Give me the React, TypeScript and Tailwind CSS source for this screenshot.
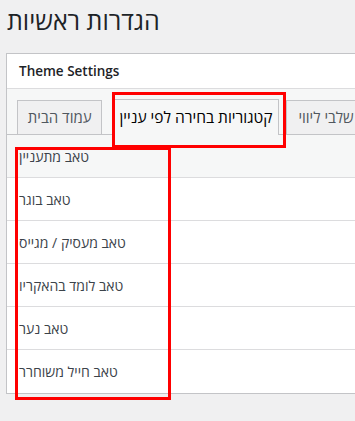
import React from "react";

const rows = [
  "טאב מתעניין",
  "טאב בוגר",
  "טאב מעסיק / מגייס",
  "טאב לומד בהאקריו",
  "טאב נער",
  "טאב חייל משוחרר",
];

export default function App() {
  return (
    <div
      className="relative w-[355px] h-[421px] overflow-hidden bg-[#f0f0f1]"
      style={{ fontFamily: '"Open Sans", "Liberation Sans", "DejaVu Sans", sans-serif' }}
    >
      <div className="pl-[7px] pt-[5px] h-[53px] text-[25px] leading-[30px] text-[#1d2327]">
        הגדרות ראשיות
      </div>
      <div className="ml-[6px] w-[370px] border border-[#c3c4c7] bg-white">
        <div className="h-[35px] flex items-center pl-[12px] border-b border-[#dcdcde] text-[13.5px] font-semibold text-[#1d2327]">
          Theme Settings
        </div>
        <div className="h-[46px] bg-[#f6f7f7] pt-[10px] pl-[10px] flex items-end gap-0 border-b border-[#c3c4c7]">
          <div className="h-[35px] w-[87px] -mb-px border border-[#c3c4c7] bg-[#f0f0f1] flex items-center justify-center text-[15px] text-[#50575e]">
            <span dir="rtl">עמוד הבית</span>
          </div>
          <div className="h-[36px] w-[170px] ml-[10px] -mb-px border border-b-0 border-[#c3c4c7] bg-[#f6f7f7] flex items-center justify-center text-[15.5px] text-[#000]">
            <span dir="rtl">קטגוריות בחירה לפי עניין</span>
          </div>
          <div className="h-[35px] w-[90px] ml-[7px] -mb-px border border-[#c3c4c7] bg-[#f0f0f1] flex items-center pl-[11px] text-[15px] text-[#50575e]">
            <span dir="rtl">שלבי ליווי</span>
          </div>
        </div>
        <div className="flex flex-col">
          {rows.map((r, i) => (
            <div
              key={r}
              className={`h-[43px] flex items-center pl-[12px] text-[14px] text-[#3c434a] ${
                i === 0 ? "bg-[#f6f7f7]" : "bg-white"
              } ${i < rows.length - 1 ? "border-b border-[#dcdcde]" : ""}`}
            >
              <span dir="rtl">{r}</span>
            </div>
          ))}
        </div>
      </div>
      <div className="absolute left-[112px] top-[92px] w-[174px] h-[56px] border-[3px] border-[#ff0000] pointer-events-none" />
      <div className="absolute left-[15px] top-[147px] w-[156px] h-[253px] border-[3px] border-[#ff0000] pointer-events-none" />
    </div>
  );
}
